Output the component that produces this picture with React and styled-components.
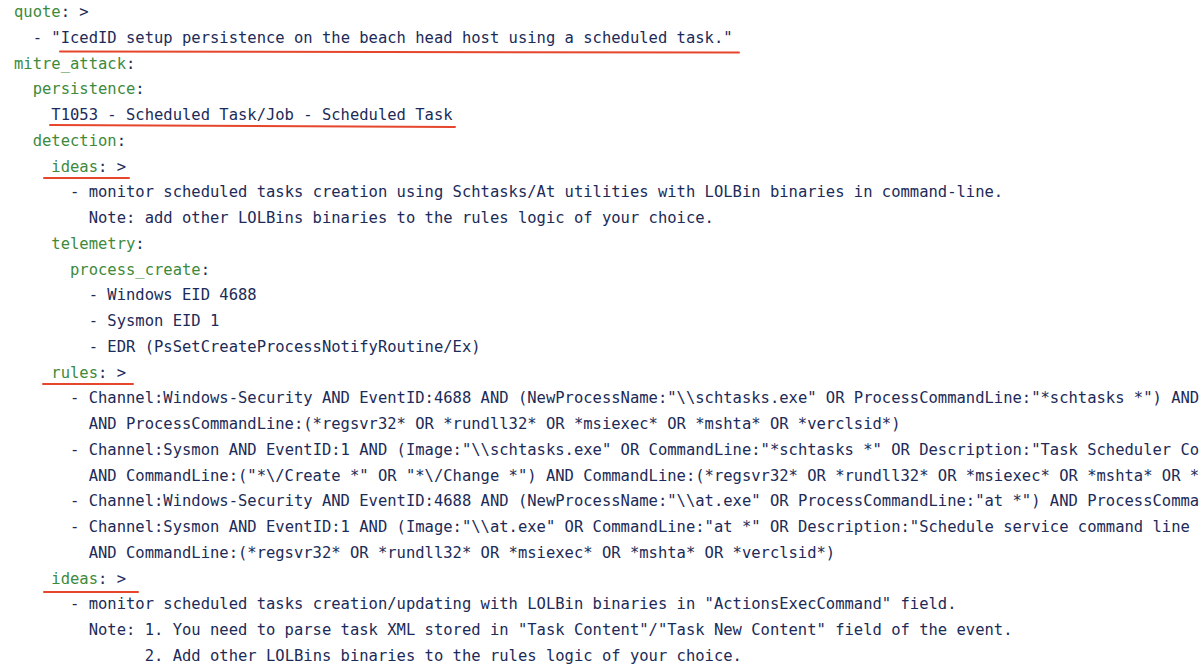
import React from "react";
import styled, { createGlobalStyle } from "styled-components";

const Global = createGlobalStyle`
  html, body {
    margin: 0;
    padding: 0;
    background: #ffffff;
    width: 1200px;
    height: 668px;
    overflow: hidden;
  }
`;

const Code = styled.div`
  box-sizing: border-box;
  width: 1200px;
  height: 668px;
  overflow: hidden;
  padding: 0 0 0 14px;
  font-family: "DejaVu Sans Mono", "Liberation Mono", monospace;
  font-size: 15.5px;
  line-height: 25.76px;
  color: #1c2b58;
  background: #ffffff;
`;

const Line = styled.div`
  white-space: pre;
  height: 25.76px;
`;

const Key = styled.span`
  color: #3d8a3d;
`;

const Mark = styled.span`
  position: relative;
  &::after {
    content: "";
    position: absolute;
    left: ${(p) => p.$l}px;
    right: ${(p) => p.$r}px;
    top: calc(50% + ${(p) => p.$y}px);
    height: 2px;
    background: #e6462c;
    border-radius: 1px;
    transform: rotate(${(p) => p.$tilt || 0}deg);
  }
`;

const sp = (n) => " ".repeat(n);

export default function App() {
  return (
    <>
      <Global />
      <Code>
        <Line>
          <Key>quote</Key>: &gt;
        </Line>
        <Line>
          {sp(2)}- "
          <Mark $l={-2} $r={-7} $y={13} $tilt={0.08}>
            IcedID setup persistence on the beach head host using a scheduled task."
          </Mark>
        </Line>
        <Line>
          <Key>mitre_attack</Key>:
        </Line>
        <Line>
          {sp(2)}
          <Key>persistence</Key>:
        </Line>
        <Line>
          {sp(4)}
          <Mark $l={-2} $r={-4} $y={10} $tilt={0.25}>
            T1053 - Scheduled Task/Job - Scheduled Task
          </Mark>
        </Line>
        <Line>
          {sp(2)}
          <Key>detection</Key>:
        </Line>
        <Line>
          {sp(3)}
          <Mark $l={1} $r={-4} $y={10}>
            {" "}
            <Key>ideas</Key>: &gt;
          </Mark>
        </Line>
        <Line>
          {sp(6)}- monitor scheduled tasks creation using Schtasks/At utilities with LOLBin binaries in command-line.
        </Line>
        <Line>
          {sp(8)}Note: add other LOLBins binaries to the rules logic of your choice.
        </Line>
        <Line>
          {sp(4)}
          <Key>telemetry</Key>:
        </Line>
        <Line>
          {sp(6)}
          <Key>process_create</Key>:
        </Line>
        <Line>{sp(8)}- Windows EID 4688</Line>
        <Line>{sp(8)}- Sysmon EID 1</Line>
        <Line>{sp(8)}- EDR (PsSetCreateProcessNotifyRoutine/Ex)</Line>
        <Line>
          {sp(3)}
          <Mark $l={0} $r={-8} $y={10}>
            {" "}
            <Key>rules</Key>: &gt;
          </Mark>
        </Line>
        <Line>
          {sp(6)}- Channel:Windows-Security AND EventID:4688 AND (NewProcessName:"\\schtasks.exe" OR ProcessCommandLine:"*schtasks *") AND
        </Line>
        <Line>
          {sp(8)}AND ProcessCommandLine:(*regsvr32* OR *rundll32* OR *msiexec* OR *mshta* OR *verclsid*)
        </Line>
        <Line>
          {sp(6)}- Channel:Sysmon AND EventID:1 AND (Image:"\\schtasks.exe" OR CommandLine:"*schtasks *" OR Description:"Task Scheduler Configuration Tool")
        </Line>
        <Line>
          {sp(8)}AND CommandLine:("*\/Create *" OR "*\/Change *") AND CommandLine:(*regsvr32* OR *rundll32* OR *msiexec* OR *mshta* OR *verclsid*)
        </Line>
        <Line>
          {sp(6)}- Channel:Windows-Security AND EventID:4688 AND (NewProcessName:"\\at.exe" OR ProcessCommandLine:"at *") AND ProcessCommandLine:(*regsvr32* OR *rundll32*)
        </Line>
        <Line>
          {sp(6)}- Channel:Sysmon AND EventID:1 AND (Image:"\\at.exe" OR CommandLine:"at *" OR Description:"Schedule service command line interface")
        </Line>
        <Line>
          {sp(8)}AND CommandLine:(*regsvr32* OR *rundll32* OR *msiexec* OR *mshta* OR *verclsid*)
        </Line>
        <Line>
          {sp(3)}
          <Mark $l={1} $r={-13} $y={12}>
            {" "}
            <Key>ideas</Key>: &gt;
          </Mark>
        </Line>
        <Line>
          {sp(6)}- monitor scheduled tasks creation/updating with LOLBin binaries in "ActionsExecCommand" field.
        </Line>
        <Line>
          {sp(8)}Note: 1. You need to parse task XML stored in "Task Content"/"Task New Content" field of the event.
        </Line>
        <Line>{sp(14)}2. Add other LOLBins binaries to the rules logic of your choice.</Line>
      </Code>
    </>
  );
}
